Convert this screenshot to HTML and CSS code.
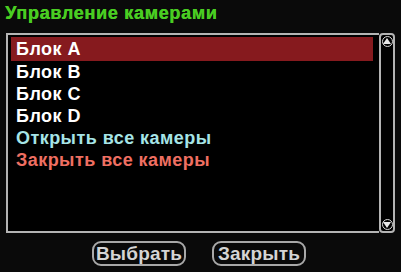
FILE: index.html
```html
<!DOCTYPE html>
<html lang="ru">
<head>
    <meta charset="UTF-8">
    <title>Управление камерами</title>
    <link rel="stylesheet" href="styles.css">
</head>
<body>
    <!-- Window title -->
    <h1 class="title">Управление камерами</h1>

    <!-- List with scrollbar -->
    <div class="panel">
        <ul class="list">
            <li class="item selected">Блок A</li>
            <li class="item">Блок B</li>
            <li class="item">Блок C</li>
            <li class="item">Блок D</li>
            <li class="item open">Открыть все камеры</li>
            <li class="item close">Закрыть все камеры</li>
        </ul>
        <div class="scrollbar">
            <span class="arrow up"></span>
            <span class="arrow down"></span>
        </div>
    </div>

    <!-- Dialog buttons -->
    <div class="buttons">
        <button class="btn">Выбрать</button>
        <button class="btn">Закрыть</button>
    </div>
</body>
</html>
```

FILE: styles.css
```css
body {
    margin: 0;
    width: 401px;
    height: 272px;
    background: #0a0a0a;
    font-family: "Liberation Sans", Arial, sans-serif;
    overflow: hidden;
}
.title {
    margin: 0;
    padding: 3px 0 0 5px;
    height: 33px;
    box-sizing: border-box;
    font-size: 18px;
    font-weight: 700;
    letter-spacing: 0.7px;
    color: #4acd22;
    text-shadow: 0.4px 0 0 #4acd22;
}
.panel {
    display: flex;
    margin-left: 6px;
    width: 389px;
    height: 200px;
}
.list {
    flex: 1;
    margin: 0;
    padding: 2px 1px 0 3px;
    list-style: none;
    background: #000;
    border: 2px solid #b4b4b4;
    border-right: none;
}
.item {
    height: 22px;
    line-height: 22px;
    padding-left: 5px;
    margin-right: 5px;
    font-size: 18px;
    font-weight: bold;
    letter-spacing: 0.45px;
    color: #fff;
}
.item.selected {
    height: 24px;
    line-height: 24px;
    background: #861a1e;
}
.item.open {
    color: #a6e4e6;
}
.item.close {
    color: #ef6f62;
}
.scrollbar {
    width: 12px;
    border: 2px solid #b4b4b4;
    border-radius: 4px;
    background: #000;
    display: flex;
    flex-direction: column;
    justify-content: space-between;
    align-items: center;
}
.arrow {
    width: 9px;
    height: 9px;
    border: 1px solid #d8d8d8;
    border-radius: 50%;
    background: #000;
    position: relative;
    margin: 1px 0;
}
.arrow::after {
    content: "";
    position: absolute;
    left: 0;
    border-left: 4.5px solid transparent;
    border-right: 4.5px solid transparent;
}
.arrow.up::after {
    top: 1px;
    border-bottom: 6px solid #e8e8e8;
}
.arrow.down::after {
    top: 2px;
    border-top: 6px solid #e8e8e8;
}
.buttons {
    display: flex;
    justify-content: center;
    gap: 26px;
    padding: 8px 0 0 0;
    margin-left: -3px;
}
.btn {
    width: 94px;
    height: 25px;
    padding: 0;
    background: #0a0a0a;
    border: 2px solid #a8a8a8;
    border-radius: 9px;
    color: #d4d4d4;
    font-family: "Liberation Sans", Arial, sans-serif;
    font-size: 19px;
    font-weight: bold;
    letter-spacing: 0.2px;
    line-height: 20px;
}
```
